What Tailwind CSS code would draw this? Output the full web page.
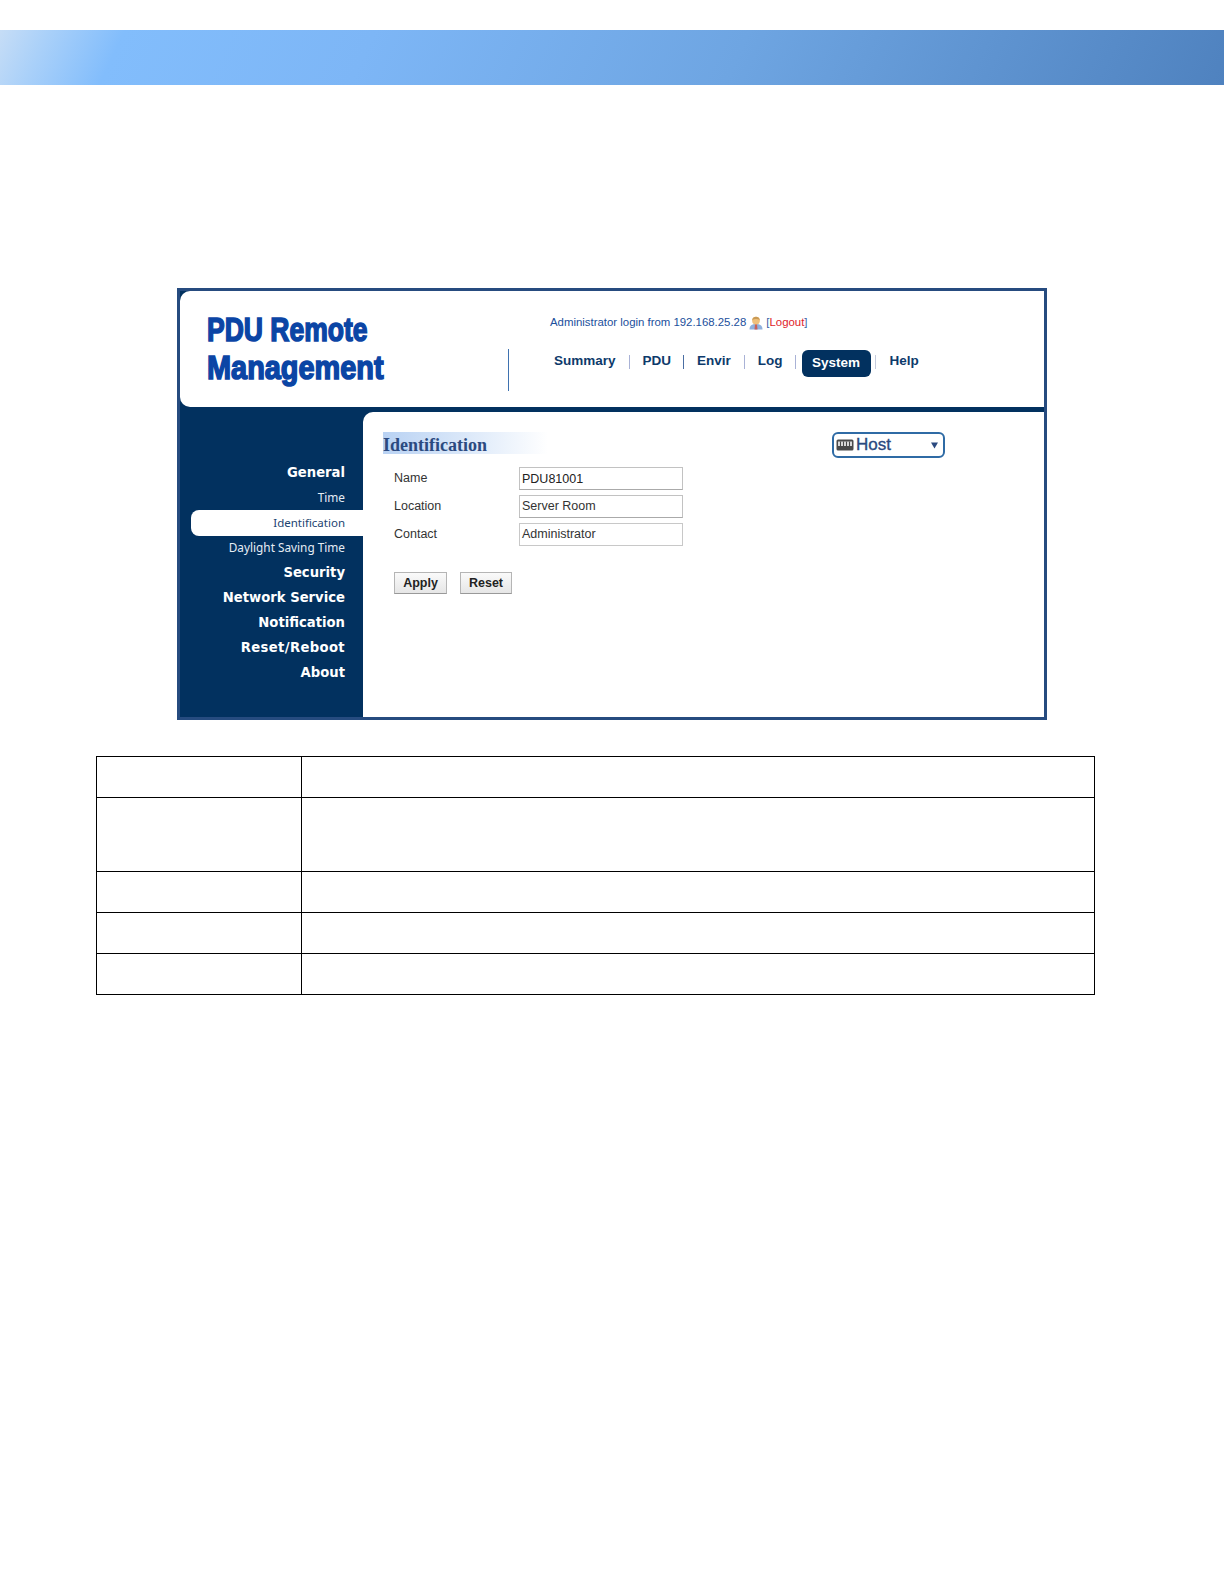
<!DOCTYPE html>
<html lang="en">
<head>
<meta charset="utf-8">
<title>PDU Remote Management</title>
<script src="https://cdn.jsdelivr.net/npm/@tailwindcss/browser@4"></script>
</head>
<body class="bg-white font-['Liberation_Sans',sans-serif]">
<div class="w-[1224px] h-[1584px] overflow-hidden pt-[30px]">
  <div class="h-[55px] bg-[linear-gradient(115deg,#c6ddf6_0%,#a9d0f9_4%,#82bdfc_10%,#7db6f6_30%,#6ea5e2_60%,#4f82bf_100%)]"></div>

  <div class="ml-[177px] mt-[203px] w-[870px] h-[432px] border-[3px] border-[#264b7f] bg-[#02315f] flex flex-col">
    <header class="h-[116px] shrink-0 bg-white rounded-l-[10px] flex">
      <div class="w-[328px] shrink-0 pl-[27px] pt-[19px] flex flex-col text-[#0b45a5] font-bold text-[34px] leading-[38px] whitespace-nowrap [-webkit-text-stroke:1.6px_#0b45a5]">
        <div class="origin-left scale-x-[0.78]">PDU Remote</div>
        <div class="origin-left scale-x-[0.85]">Management</div>
      </div>
      <div class="w-px h-[42px] mt-[58px] bg-[#3f72b0]"></div>
      <div class="pl-[41px] pt-[24px] flex flex-col">
        <div class="flex items-center h-[15px] text-[11.4px] text-[#1b4f9c]">
          <span>Administrator login from 192.168.25.28</span>
          <svg class="ml-[3px] w-[14px] h-[14px]" viewBox="0 0 14 14">
            <path d="M0.5 13.5C0.5 9.5 3 8 7 8s6.5 1.5 6.5 5.5z" fill="#8fb0dd"/>
            <path d="M6 8h2l.5 5.5h-3z" fill="#c8605a"/>
            <circle cx="7" cy="4.6" r="3.9" fill="#efc07c"/>
            <path d="M3.2 4C3.6 1.8 5.2.7 7 .7s3.4 1.1 3.8 3.3C8.5 2.8 5.5 2.8 3.2 4z" fill="#c99a55"/>
          </svg>
          <span class="ml-[3px] text-[#3a5fa8]">[<span class="text-[#e0222a]">Logout</span>]</span>
        </div>
        <nav class="mt-[20px] ml-[4px] flex items-center h-[27px] text-[13.5px] font-bold text-[#0d3a6b]">
          <span class="-mt-[4px]">Summary</span>
          <span class="ml-[13px] w-px h-[14px] -mt-[3px] bg-[#a9b2d6]"></span>
          <span class="ml-[13px] -mt-[4px]">PDU</span>
          <span class="ml-[12px] w-px h-[14px] -mt-[3px] bg-[#4a6ea3]"></span>
          <span class="ml-[13px] -mt-[4px]">Envir</span>
          <span class="ml-[13px] w-px h-[14px] -mt-[3px] bg-[#a9b2d6]"></span>
          <span class="ml-[13px] -mt-[4px]">Log</span>
          <span class="ml-[12px] w-px h-[14px] -mt-[3px] bg-[#a9b2d6]"></span>
          <span class="ml-[6px] w-[69px] h-[27px] rounded-[6px] bg-[#02315f] text-white flex items-center justify-center">System</span>
          <span class="ml-[4px] w-px h-[14px] -mt-[3px] bg-[#c5cbdc]"></span>
          <span class="ml-[14px] -mt-[4px]">Help</span>
        </nav>
      </div>
    </header>

    <div class="mt-[5px] flex-1 flex min-h-0">
      <aside class="w-[183px] shrink-0 pt-[48px] flex flex-col text-right text-white">
        <div class="h-[25px] pr-[18px] leading-[25px] font-['DejaVu_Sans',sans-serif] font-bold text-[13.2px]">General</div>
        <div class="h-[25px] pr-[18px] leading-[25px] font-['Noto_Sans',sans-serif] text-[11.8px] text-[#e6edf5]">Time</div>
        <div class="h-[26px] -my-[0.5px] ml-[11px] pr-[18px] leading-[26px] bg-white rounded-l-[8px] font-['Noto_Sans',sans-serif] text-[11.5px] text-[#1d4470]">Identification</div>
        <div class="h-[25px] pr-[18px] leading-[25px] font-['Noto_Sans',sans-serif] text-[11.8px] text-[#e6edf5]">Daylight Saving Time</div>
        <div class="h-[25px] pr-[18px] leading-[26px] font-['DejaVu_Sans',sans-serif] font-bold text-[13.2px]">Security</div>
        <div class="h-[25px] pr-[18px] leading-[25px] font-['DejaVu_Sans',sans-serif] font-bold text-[13.2px]">Network Service</div>
        <div class="h-[25px] pr-[18px] leading-[25px] font-['DejaVu_Sans',sans-serif] font-bold text-[13.2px]">Notification</div>
        <div class="h-[25px] pr-[18px] leading-[25px] font-['DejaVu_Sans',sans-serif] font-bold text-[13.2px] tracking-[0.35px]">Reset/Reboot</div>
        <div class="h-[25px] pr-[18px] leading-[25px] font-['DejaVu_Sans',sans-serif] font-bold text-[13.2px]">About</div>
      </aside>

      <main class="flex-1 bg-white rounded-tl-[10px] pt-[20px] pl-[20px]">
        <div class="flex items-start">
          <h1 class="w-[165px] h-[22px] leading-[27px] font-['Liberation_Serif',serif] font-bold text-[18px] text-[#2b4a80] bg-[linear-gradient(90deg,#b9d2f3_0%,#dbe8f9_50%,#ffffff_100%)]">Identification</h1>
          <div class="ml-auto mr-[99px] w-[113px] h-[26px] border-2 border-[#2f6ba5] rounded-[6px] flex items-center pl-[2px] pr-[5px]">
            <svg class="w-[18px] h-[12px] shrink-0" viewBox="0 0 18 12">
              <rect x="0.5" y="0.5" width="17" height="11" rx="1.5" fill="#4a4a4a"/>
              <rect x="2" y="2.5" width="14" height="4.5" fill="#d8d8d8"/>
              <path d="M4.5 2.5v4.5M7.5 2.5v4.5M10.5 2.5v4.5M13.5 2.5v4.5" stroke="#4a4a4a" stroke-width="1"/>
            </svg>
            <span class="ml-[2px] text-[17px] text-[#2b4a80] [-webkit-text-stroke:0.35px_#2b4a80]">Host</span>
            <svg class="ml-auto w-[7px] h-[7px]" viewBox="0 0 7 7"><path d="M0 0.5h7L3.5 6.5z" fill="#2b4a80"/></svg>
          </div>
        </div>
        <div class="mt-[9px] ml-[11px] flex flex-col gap-[5px] text-[12.5px] text-[#333]">
          <div class="flex items-start"><span class="w-[125px] leading-[22px]">Name</span><div class="w-[164px] h-[23px] px-[2px] border border-[#c2c2c2] border-b-[#aaa] leading-[22px] text-[#222]">PDU81001</div></div>
          <div class="flex items-start"><span class="w-[125px] leading-[22px]">Location</span><div class="w-[164px] h-[23px] px-[2px] border border-[#c2c2c2] border-b-[#aaa] leading-[21px] text-[#333]">Server Room</div></div>
          <div class="flex items-start"><span class="w-[125px] leading-[22px]">Contact</span><div class="w-[164px] h-[23px] px-[2px] border border-[#c8c8c8] leading-[20px] text-[#333]">Administrator</div></div>
        </div>
        <div class="mt-[26px] ml-[11px] flex gap-[13px]">
          <button class="w-[53px] h-[22px] border border-[#b5b5b5] border-b-[#999] bg-[linear-gradient(180deg,#fafafa,#e6e6e6)] text-[12.5px] font-bold text-[#222]">Apply</button>
          <button class="w-[52px] h-[22px] border border-[#b5b5b5] border-b-[#999] bg-[linear-gradient(180deg,#fafafa,#e6e6e6)] text-[12.5px] font-bold text-[#222]">Reset</button>
        </div>
      </main>
    </div>
  </div>

  <div class="ml-[96px] mt-[36px] w-[999px] grid grid-cols-[205px_1fr] grid-rows-[41px_74px_41px_41px_41px] border-t border-l border-black">
    <div class="border-r border-b border-black"></div><div class="border-r border-b border-black"></div>
    <div class="border-r border-b border-black"></div><div class="border-r border-b border-black"></div>
    <div class="border-r border-b border-black"></div><div class="border-r border-b border-black"></div>
    <div class="border-r border-b border-black"></div><div class="border-r border-b border-black"></div>
    <div class="border-r border-b border-black"></div><div class="border-r border-b border-black"></div>
  </div>
</div>
</body>
</html>
